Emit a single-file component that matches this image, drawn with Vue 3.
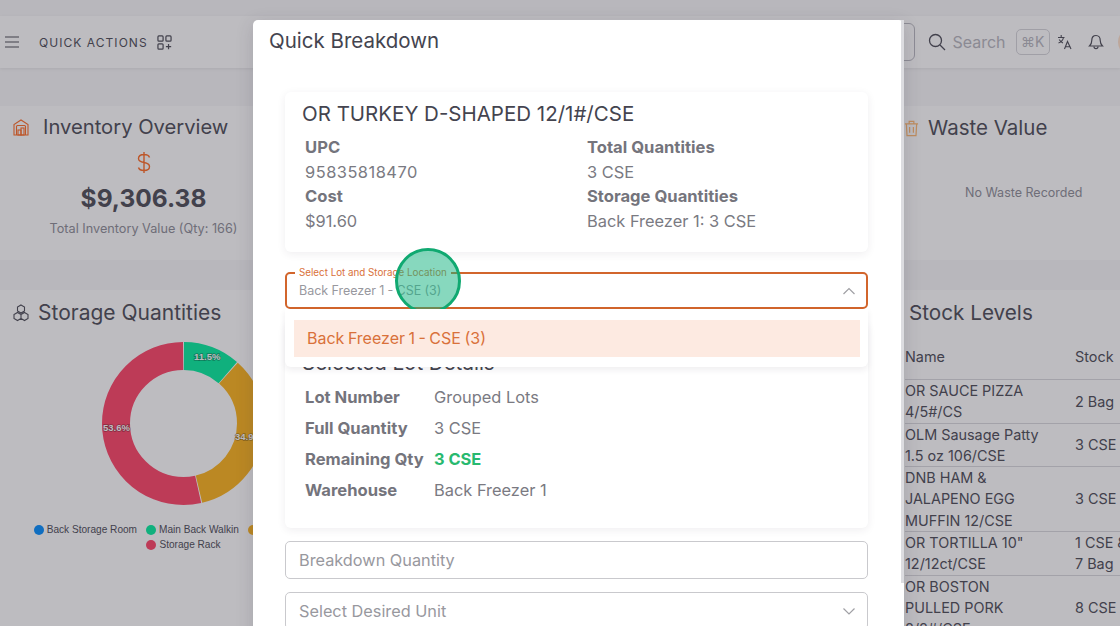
<script setup>
const stockRows = [
  { name: ['OR SAUCE PIZZA', '4/5#/CS'], stock: ['2 Bag'] },
  { name: ['OLM Sausage Patty', '1.5 oz 106/CSE'], stock: ['3 CSE'] },
  { name: ['DNB HAM &', 'JALAPENO EGG', 'MUFFIN 12/CSE'], stock: ['3 CSE'] },
  { name: ['OR TORTILLA 10"', '12/12ct/CSE'], stock: ['1 CSE &', '7 Bag'] },
  { name: ['OR BOSTON', 'PULLED PORK', '8/8#/CSE'], stock: ['8 CSE'] },
]

const lotRows = [
  { label: 'Lot Number', value: 'Grouped Lots' },
  { label: 'Full Quantity', value: '3 CSE' },
  { label: 'Remaining Qty', value: '3 CSE', good: true },
  { label: 'Warehouse', value: 'Back Freezer 1' },
]

const legend = [
  { label: 'Back Storage Room', color: '#008cff' },
  { label: 'Main Back Walkin', color: '#00ed9c' },
  { label: 'Back Freezer 1', color: '#fcb319' },
  { label: 'Storage Rack', color: '#ff4165' },
]
</script>

<template>
  <div class="page">
    <div class="dashboard">
      <header class="navbar">
        <div class="nav-left">
          <svg width="16" height="16" viewBox="0 0 16 16" fill="none" stroke="#4a4a55" stroke-width="1.2">
            <path d="M1 3h14M1 8h14M1 13h14" />
          </svg>
          <span class="quick">QUICK ACTIONS</span>
          <svg width="15" height="15" viewBox="0 0 16 16" fill="none" stroke="#4a4a55" stroke-width="1.3">
            <rect x="1" y="1" width="5.5" height="5.5" rx="1" />
            <rect x="9.5" y="1" width="5.5" height="5.5" rx="1" />
            <rect x="1" y="9.5" width="5.5" height="5.5" rx="1" />
            <path d="M9.5 12.3h5.6M12.3 9.6v5.6" />
          </svg>
        </div>
        <div class="nav-right">
          <div class="nav-input"></div>
          <svg class="search-icon" width="18" height="18" viewBox="0 0 18 18" fill="none" stroke="#4a4a55" stroke-width="1.3">
            <circle cx="7.5" cy="7.5" r="6" />
            <path d="M12 12l5 5" />
          </svg>
          <span class="search">Search</span>
          <span class="kbd">⌘K</span>
          <svg class="lang" width="16" height="16" viewBox="0 0 16 16" fill="none" stroke="#4a4a55" stroke-width="1.1">
            <path d="M1 3.500h6.500M4.200 1v2.500M6.500 3.500C6 6 4.300 8 1.500 9M2.200 5.500c.8 1.500 2 2.800 3.800 3.500" />
            <path d="M7.500 15l3-7.500 3.500 7.500M8.500 12.800h4.600" />
          </svg>
          <svg class="bell" width="16" height="17" viewBox="0 0 16 17" fill="none" stroke="#4a4a55" stroke-width="1.2">
            <path d="M8 1.500c-2.800 0-4.200 2.100-4.200 4.700 0 3.300-1.300 4.800-2.300 5.800h13c-1-1-2.300-2.500-2.300-5.800 0-2.600-1.400-4.700-4.200-4.700z" />
            <path d="M6 12.500c0 2.800 4 2.800 4 0" />
          </svg>
          <div class="avatar"></div>
        </div>
      </header>

      <section class="row top-row">
        <div class="card inv">
          <h3 class="card-title">
            <svg width="16" height="17" viewBox="0 0 16 17" fill="none" stroke="#ff6a23" stroke-width="1.100">
              <path d="M1 16V5.500L8 1l7 4.500V16z" />
              <path d="M3.500 16V7.500a1 1 0 0 1 1-1h7a1 1 0 0 1 1 1V16" />
              <rect x="5" y="11" width="3" height="5" />
              <rect x="8" y="9" width="3" height="7" />
            </svg>
            Inventory Overview
          </h3>
          <svg class="dollar" width="14" height="21" viewBox="0 0 14 21" fill="none" stroke="#ff6a23" stroke-width="1.400">
            <path d="M12.500 5.500C12 3.500 10 2.500 7 2.500 3.500 2.500 1.500 4 1.500 6.500S4 10 7 10.500s5.500 1.500 5.500 4-2.500 4-5.500 4-5-1-5.500-3M7 0v21" />
          </svg>
          <div class="amount">$9,306.38</div>
          <div class="amount-note">Total Inventory Value (Qty: 166)</div>
        </div>
        <div class="card waste">
          <h3 class="card-title">
            <svg width="15" height="17" viewBox="0 0 16 18" fill="none" stroke="#ffb970" stroke-width="1.300">
              <path d="M1 4h14M5.500 4V1.500h5V4M2.500 4l.7 12.500h9.600L13.500 4M6 7.500v6M10 7.500v6" />
            </svg>
            Waste Value
          </h3>
          <div class="no-waste">No Waste Recorded</div>
        </div>
      </section>

      <section class="row bottom-row">
        <div class="card storage">
          <h3 class="card-title">
            <svg width="18" height="18" viewBox="0 0 18 18" fill="none" stroke="#4a4a55" stroke-width="1.100">
              <path d="M9 1l3.500 2v4L9 9 5.500 7V3zM5.500 8.500L9 10.500v4l-3.500 2L2 14.500v-4zM12.500 8.500l3.500 2v4l-3.500 2L9 14.500v-4z" />
            </svg>
            Storage Quantities
          </h3>
          <svg class="donut" width="163" height="163" viewBox="0 0 163 163">
            <g fill="none" stroke-width="28" transform="rotate(-90 81.500 81.500)">
              <circle cx="81.500" cy="81.500" r="67.500" pathLength="100" stroke="#ffffff" />
              <circle cx="81.500" cy="81.500" r="67.500" pathLength="100" stroke="#00ed9c" stroke-dasharray="11.300 88.700" stroke-dashoffset="-0.100" />
              <circle cx="81.500" cy="81.500" r="67.500" pathLength="100" stroke="#fcb319" stroke-dasharray="34.700 65.300" stroke-dashoffset="-11.600" />
              <circle cx="81.500" cy="81.500" r="67.500" pathLength="100" stroke="#ff4165" stroke-dasharray="53.400 46.600" stroke-dashoffset="-46.500" />
            </g>
            <text x="92" y="18" class="pct">11.5%</text>
            <text x="1" y="89" class="pct">53.6%</text>
            <text x="133" y="98" class="pct">34.9%</text>
          </svg>
          <div class="legend">
            <span v-for="item in legend" :key="item.label" class="legend-item">
              <i :style="{ background: item.color }"></i>{{ item.label }}
            </span>
          </div>
        </div>
        <div class="card stock">
          <h3 class="card-title">Stock Levels</h3>
          <div class="stock-head">
            <span>Name</span>
            <span>Stock</span>
          </div>
          <div v-for="row in stockRows" :key="row.name[0]" class="stock-row">
            <div>
              <div v-for="line in row.name" :key="line">{{ line }}</div>
            </div>
            <div>
              <div v-for="line in row.stock" :key="line">{{ line }}</div>
            </div>
          </div>
        </div>
      </section>
    </div>

    <div class="backdrop"></div>

    <div class="modal">
      <h2 class="modal-title">Quick Breakdown</h2>
      <div class="modal-body">
        <div class="panel product">
          <h4>OR TURKEY D-SHAPED 12/1#/CSE</h4>
          <div class="facts">
            <div>
              <b>UPC</b>
              <p class="upc">95835818470</p>
              <b>Cost</b>
              <p>$91.60</p>
            </div>
            <div>
              <b>Total Quantities</b>
              <p>3 CSE</p>
              <b>Storage Quantities</b>
              <p>Back Freezer 1: 3 CSE</p>
            </div>
          </div>
        </div>

        <div class="select active">
          <span class="float-label">Select Lot and Storage Location</span>
          <span class="select-value">Back Freezer 1 - CSE (3)</span>
          <svg width="12" height="12" viewBox="0 0 12 12" fill="none" stroke="#a0a0a5" stroke-width="1.200">
            <path d="M.5 9L6 3.500 11.500 9" />
          </svg>
          <div class="click-dot"></div>
        </div>

        <div class="panel lot">
          <h4>Selected Lot Details</h4>
          <div class="lot-grid">
            <template v-for="row in lotRows" :key="row.label">
              <b>{{ row.label }}</b>
              <span :class="{ good: row.good }">{{ row.value }}</span>
            </template>
          </div>
          <div class="dropdown">
            <div class="option">Back Freezer 1 - CSE (3)</div>
          </div>
        </div>

        <div class="select">
          <span class="select-value big">Breakdown Quantity</span>
        </div>
        <div class="select">
          <span class="select-value big">Select Desired Unit</span>
          <svg width="12" height="12" viewBox="0 0 12 12" fill="none" stroke="#a0a0a5" stroke-width="1.200">
            <path d="M.5 3.500L6 9l5.500-5.500" />
          </svg>
        </div>
      </div>
      <div class="scroll-thumb"></div>
    </div>
  </div>
</template>

<style>
html, body {
  margin: 0;
  overflow: hidden;
}
</style>

<style scoped>
.page {
  position: relative;
  width: 1120px;
  height: 626px;
  overflow: hidden;
  font-family: Inter, "Liberation Sans", sans-serif;
  background: #f8f8f9;
  color: #4a4a55;
}

.dashboard {
  width: 1120px;
  padding-top: 16px;
  box-sizing: border-box;
}

.navbar {
  height: 52px;
  background: #fff;
  display: flex;
  justify-content: space-between;
  align-items: center;
  padding-left: 4px;
  box-shadow: 0 1px 3px rgba(0, 0, 0, 0.08);
}

.nav-left,
.nav-right {
  display: flex;
  align-items: center;
}

.nav-right {
  margin-right: -28px;
}

.quick {
  font-size: 12px;
  letter-spacing: 1.05px;
  margin: 0 9px 0 19px;
}

.nav-input {
  width: 110px;
  height: 38px;
  box-sizing: border-box;
  border: 1px solid #b9b9c0;
  border-radius: 6px;
  margin-right: 13px;
}

.search-icon {
  margin-right: 6px;
}

.search {
  font-size: 16px;
  color: #b5b5bd;
  margin-right: 10px;
}

.kbd {
  font-size: 14px;
  line-height: 18px;
  color: #b5b5bd;
  border: 1px solid #d4d4d9;
  border-radius: 5px;
  padding: 3px 4.500px;
  margin-right: 7px;
}

.lang {
  margin-right: 15px;
}

.bell {
  margin-right: 14px;
}

.avatar {
  width: 30px;
  height: 30px;
  flex-shrink: 0;
  border-radius: 50%;
  background: #ffe0c8;
}

.row {
  display: flex;
  justify-content: space-between;
}

.top-row {
  margin-top: 38px;
  height: 154px;
}

.bottom-row {
  margin-top: 30px;
}

.card {
  background: #fff;
  box-sizing: border-box;
}

.card-title {
  margin: 0;
  font-size: 20.500px;
  font-weight: 400;
  line-height: 24px;
  display: flex;
  align-items: center;
  gap: 9px;
  white-space: nowrap;
}

.inv {
  width: 287px;
  padding: 9px 12px;
  text-align: center;
}

.inv .card-title {
  gap: 14px;
  font-size: 20.200px;
  padding-left: 1px;
}

.dollar {
  display: block;
  margin: 13px auto 0;
}

.amount {
  font-size: 24.500px;
  line-height: 30px;
  font-weight: 700;
  margin-top: 10px;
}

.amount-note {
  font-size: 12.700px;
  line-height: 16px;
  color: #8c8c96;
  margin-top: 8px;
  white-space: nowrap;
}

.waste {
  width: 216px;
  padding: 10px 0 0 0;
}

.no-waste {
  font-size: 12.500px;
  line-height: 16px;
  color: #8c8c96;
  margin-top: 45px;
  padding-left: 61px;
}

.storage {
  width: 367px;
  height: 400px;
  padding: 11px 12px;
}

.storage .card-title {
  font-size: 21px;
  gap: 8px;
}

.donut {
  display: block;
  margin: 17px 0 0 90px;
}

.pct {
  font-family: "Liberation Sans", sans-serif;
  font-size: 9.500px;
  font-weight: 700;
  fill: #fff;
  stroke: rgba(0, 0, 0, 0.35);
  stroke-width: 1.500px;
  paint-order: stroke;
}

.legend {
  display: flex;
  flex-wrap: wrap;
  justify-content: center;
  column-gap: 9px;
  margin: 17px 0 0 -12px;
  width: 367px;
  font-family: "Liberation Sans", sans-serif;
  font-size: 10.100px;
}

.legend-item {
  display: inline-flex;
  align-items: center;
  gap: 3px;
  line-height: 15px;
}

.legend-item:nth-child(3) {
  margin-right: 4px;
}

.legend-item i {
  width: 10px;
  height: 10px;
  border-radius: 50%;
}

.stock {
  width: 216px;
  padding: 11px 0 0 1px;
  font-size: 14.400px;
}

.stock .card-title {
  padding-left: 4px;
  font-size: 20.700px;
}

.stock-head,
.stock-row {
  display: grid;
  grid-template-columns: 170px 1fr;
  align-items: center;
  border-bottom: 1px solid #d9d9de;
  line-height: 21.300px;
  white-space: nowrap;
}

.stock-head {
  height: 45px;
  margin-top: 9px;
}

.backdrop {
  position: absolute;
  inset: 0;
  background: rgba(50, 48, 60, 0.32);
}

.modal {
  position: absolute;
  left: 253px;
  top: 20px;
  width: 651px;
  height: 640px;
  background: #fff;
  border-radius: 5px 5px 0 0;
  box-sizing: border-box;
  padding: 0 36px 0 32px;
  box-shadow: 0 4px 18px rgba(47, 43, 61, 0.16);
}

.modal-title {
  margin: 0 0 0 -16px;
  padding-top: 9px;
  font-size: 20.500px;
  font-weight: 400;
  line-height: 24px;
  color: #44444f;
}

.modal-body {
  margin-top: 39px;
  display: flex;
  flex-direction: column;
}

.panel {
  box-shadow: 0 2px 8px rgba(47, 43, 61, 0.08);
  border-radius: 6px;
  background: #fff;
  padding: 9px 17px;
}

.panel h4 {
  margin: 0;
  font-size: 20.500px;
  font-weight: 400;
  line-height: 26px;
  color: #44444f;
}

.facts {
  display: grid;
  grid-template-columns: 282px 1fr;
  padding: 8px 3px 0;
  font-size: 16.400px;
  line-height: 24.500px;
}

.facts b,
.lot-grid b {
  font-weight: 700;
  font-size: 16.600px;
  display: block;
  color: #74747c;
}

.facts p {
  margin: 0;
  color: #7a7a82;
}

.facts .upc {
  letter-spacing: 0.5px;
}

.product {
  height: 160px;
  box-sizing: border-box;
}

.select {
  position: relative;
  height: 38px;
  border: 1px solid #c9c9cd;
  border-radius: 5px;
  display: flex;
  align-items: center;
  justify-content: space-between;
  padding: 0 12px 0 13px;
  margin-top: 13px;
  box-sizing: border-box;
}

.select.active {
  height: 37px;
  border: 2px solid #d2652c;
  margin-top: 20px;
  padding: 0 11px 0 12px;
}

.float-label {
  position: absolute;
  left: 8px;
  top: -7px;
  background: #fff;
  padding: 0 4px;
  font-size: 9.800px;
  line-height: 11px;
  color: #d9713a;
}

.select-value {
  font-size: 12.500px;
  color: #98989e;
  word-spacing: -0.300px;
}

.select-value.big {
  font-size: 16.300px;
  word-spacing: 0;
}

.click-dot {
  position: absolute;
  left: 108px;
  top: -26px;
  width: 66px;
  height: 66px;
  box-sizing: border-box;
  border: 3px solid #10a971;
  border-radius: 50%;
  background: rgba(16, 177, 125, 0.5);
}

.lot {
  position: relative;
  margin-top: 13px;
  height: 206px;
  box-sizing: border-box;
  padding-top: 28px;
}

.lot-grid {
  display: grid;
  grid-template-columns: 129px 1fr;
  row-gap: 7px;
  padding: 9px 3px 0;
  font-size: 16.400px;
  line-height: 24px;
  white-space: nowrap;
}

.lot-grid span {
  color: #7a7a82;
}

.lot-grid .good {
  color: #28b96f;
  font-weight: 700;
}

.dropdown {
  position: absolute;
  left: 0;
  right: 0;
  top: -13px;
  height: 58px;
  padding: 11px 8px 0 9px;
  box-sizing: border-box;
  background: #fff;
  border-radius: 0 0 6px 6px;
  box-shadow: 0 3px 6px rgba(47, 43, 61, 0.08);
}

.option {
  background: #fdeae1;
  color: #d9713a;
  font-size: 16px;
  line-height: 37px;
  padding-left: 13px;
  word-spacing: -1px;
}

.scroll-thumb {
  position: absolute;
  left: 648px;
  top: 0;
  width: 3px;
  height: 563px;
  background: #dcdce0;
}
</style>
